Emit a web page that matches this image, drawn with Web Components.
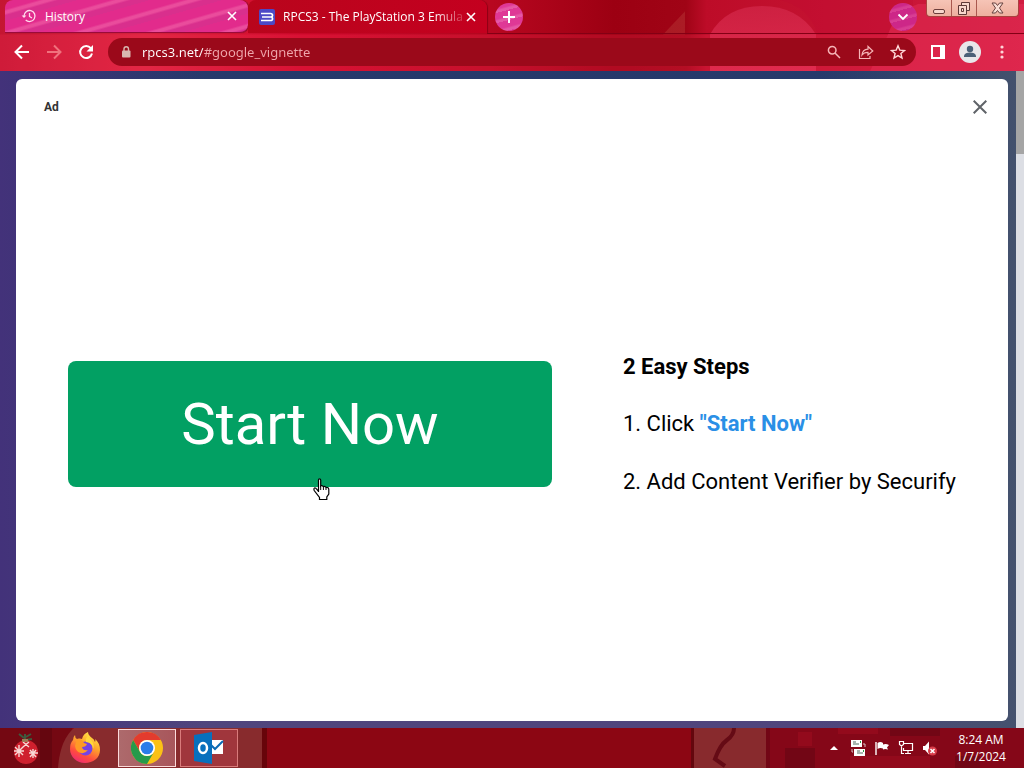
<!DOCTYPE html>
<html lang="en">
<head>
<meta charset="utf-8">
<title>RPCS3 - The PlayStation 3 Emulator</title>
<style>
html,body{height:100%;margin:0}
body{display:flex;flex-direction:column;font-family:"Open Sans","Noto Sans",sans-serif;overflow:hidden}
</style>
</head>
<body>
<browser-frame>
  <browser-tab slot="tabs" label="History" kind="history"></browser-tab>
  <browser-tab slot="tabs" label="RPCS3 - The PlayStation 3 Emula" kind="site" active></browser-tab>
  <browser-toolbar slot="toolbar" url="rpcs3.net/#google_vignette"></browser-toolbar>
  <ad-card></ad-card>
</browser-frame>
<task-bar></task-bar>

<script>
const base = `*,:host{box-sizing:border-box}
button{border:0;background:none;padding:0;margin:0;color:inherit;font:inherit;display:flex;align-items:center;justify-content:center}
svg{display:block;flex:none}`;
const define = (name, render) => customElements.define(name, class extends HTMLElement {
  connectedCallback() {
    if (this.shadowRoot) return;
    const t = document.createElement('template');
    t.innerHTML = render(this);
    this.attachShadow({mode: 'open'}).append(t.content.cloneNode(true));
  }
});

define('browser-tab', el => {
  const active = el.hasAttribute('active');
  const icon = active
    ? `<svg width="16" height="16" viewBox="0 0 16 16"><rect width="16" height="16" rx="2" fill="#4c49c6"/><path d="M2 4.500h9.500q2 0 2 1.800t-1.500 1.700q1.500 0 1.500 1.800t-2 1.700H2M3 8h9" fill="none" stroke="#fff" stroke-width="1.700"/></svg>`
    : `<svg width="16" height="16" viewBox="0 0 16 16" fill="none" stroke="#ffdcec" stroke-width="1.300"><path d="M3 8a5.500 5.500 0 1 1 1.700 4M8.500 5v3.500l2.500 1.500"/><path d="M.6 7.400h4.800L3 10z" fill="#ffdcec" stroke="none"/></svg>`;
  return `<style>${base}
:host{display:flex;align-items:center;height:33px;padding:0 8px 0 16px;gap:8px;color:#fff;font-size:12px;min-width:0;
${active ? 'flex:0 1 239px;padding-left:11px;background:linear-gradient(90deg,#b9051c,#c4001f);border-radius:8px 8px 0 0;box-shadow:1px 0 1px #8c0014'
 : 'flex:0 1 243px;background:repeating-linear-gradient(164deg,#e22b8c 0 9px,#ea4c9c 11px 13px,#d92f8d 15px 20px);border-radius:8px 8px 8px 0;border-bottom:1px solid #9b0a39;box-shadow:1px 0 1px #820b2d'}}
span{flex:1;overflow:hidden;white-space:nowrap;${active ? 'mask-image:linear-gradient(90deg,#000 84%,#0003)' : ''}}
button{width:16px;height:16px;margin-left:-8px}</style>
${icon}<span>${el.getAttribute('label')}</span>
<button aria-label="Close tab"><svg width="10" height="10" viewBox="0 0 10 10" stroke="#fff" stroke-width="1.600"><path d="M1 1l8 8M9 1L1 9"/></svg></button>`;
});

define('window-controls', () => `<style>${base}
:host{display:flex;height:17px;border:1px solid #a9423f;border-top:0;border-radius:0 0 4px 4px;background:linear-gradient(#f6c4b6,#eeb09f);overflow:hidden}
button{width:24px}
button+button{border-left:1px solid #a9584f;width:25px}
button:last-child{width:42px}</style>
<button aria-label="Minimize"><svg width="14" height="15" viewBox="0 0 14 15"><rect x="1.500" y="8.500" width="11" height="4" rx="1.500" fill="#f7d6cc" stroke="#6b3d3a"/></svg></button>
<button aria-label="Restore"><svg width="14" height="15" viewBox="0 0 14 15" fill="#f7d6cc" stroke="#5e3937"><path d="M4.500 1.500h8v8h-8z"/><path d="M1.500 4.500h8v9h-8z"/><path d="M4.500 7.500h2v3h-2z"/></svg></button>
<button aria-label="Close"><svg width="13" height="12" viewBox="0 0 13 12"><path d="M1 1h3.500l2 2.500 2-2.500H12L8.500 6l3.500 5H8.500l-2-2.500-2 2.500H1l3.500-5z" fill="#f8dcd4" stroke="#674341"/></svg></button>`);

define('browser-toolbar', el => `<style>${base}
:host{display:flex;align-items:center;height:38px;padding:0 6px;color:#fff}
button{width:32px;height:32px;flex:none}
form{flex:1;display:flex;align-items:center;min-width:0;height:28px;margin:0 6px;padding:0 2px 0 12px;border-radius:14px;background:#9b091a}
input{flex:1;min-width:0;border:0;outline:0;padding:0;margin-left:10px;height:24px;font:13px "Noto Sans","Open Sans",sans-serif;color:transparent;background:linear-gradient(90deg,#fff 61px,#efa6ac 61px);background-clip:text;-webkit-background-clip:text}
</style>
<button aria-label="Back"><svg width="16" height="16" viewBox="0 0 16 16" fill="none" stroke="#fff" stroke-width="2"><path d="M15 8H2M8 1.500L1.500 8 8 14.500"/></svg></button>
<button aria-label="Forward"><svg width="16" height="16" viewBox="0 0 16 16" fill="none" stroke="#f0727d" stroke-width="2"><path d="M1 8h13M8 1.500L14.500 8 8 14.500"/></svg></button>
<button aria-label="Reload"><svg width="16" height="16" viewBox="0 0 16 16"><path d="M12.800 4.200A6 6 0 1 0 14 9.500" fill="none" stroke="#fff" stroke-width="2"/><path d="M15 1v6.500H8.500z" fill="#fff"/></svg></button>
<form>
<svg width="12" height="14" viewBox="0 0 12 14"><rect x="2" y="5.500" width="8.500" height="7" rx="1" fill="#d9b8b0"/><path d="M4 6V4a2.250 2.250 0 0 1 4.500 0v2" fill="none" stroke="#d9b8b0" stroke-width="1.400"/></svg>
<input aria-label="Address" value="${el.getAttribute('url')}">
<button type="button" aria-label="Zoom"><svg width="16" height="16" viewBox="0 0 16 16" fill="none" stroke="#f6b5b7" stroke-width="1.500"><circle cx="6.200" cy="6.200" r="3.800"/><path d="M9 9l5 5"/></svg></button>
<button type="button" aria-label="Share"><svg width="16" height="16" viewBox="0 0 16 16" fill="none" stroke="#f6b5b7" stroke-width="1.200"><path d="M1.500 5v9.500H12V12"/><path d="M4 11q.5-5.500 6-5.800V2.500L14.800 7 10 11V8.300Q6 8.200 4 11z"/></svg></button>
<button type="button" aria-label="Bookmark"><svg width="16" height="16" viewBox="0 0 16 16" fill="none" stroke="#ffd9d9" stroke-width="1.400"><path d="M8 1.800l1.800 4.300 4.700.4-3.600 3 1.100 4.600-4-2.500-4 2.500 1.100-4.600-3.600-3 4.700-.4z"/></svg></button>
</form>
<button aria-label="Side panel"><svg width="14" height="14" viewBox="0 0 14 14"><path d="M0 0h14v14H0zM2 2v10h7V2z" fill="#fff" fill-rule="evenodd"/></svg></button>
<button aria-label="Profile"><svg width="22" height="22" viewBox="0 0 22 22"><circle cx="11" cy="11" r="11" fill="#e8e6ea"/><circle cx="11" cy="8" r="3.200" fill="#4b6078"/><path d="M5 16v-1.500q1-3 6-3t6 3V16z" fill="#4b6078"/></svg></button>
<button aria-label="Menu"><svg width="4" height="14" viewBox="0 0 4 14" fill="#ffd5d8"><circle cx="2" cy="2" r="1.600"/><circle cx="2" cy="7" r="1.600"/><circle cx="2" cy="12" r="1.600"/></svg></button>`);

define('browser-frame', () => `<style>${base}
:host{display:flex;flex-direction:column;flex:1;min-height:0}
header{position:relative;isolation:isolate;box-shadow:inset 0 -1px #8a4c78}
.art{position:absolute;inset:0;width:100%;height:100%;z-index:-1}
.strip{display:flex;align-items:flex-start;height:33px;padding:0 5px}
.round{width:28px;height:28px;margin:3px 0 0 8px;border-radius:50%;background:repeating-linear-gradient(165deg,#df3896 0 6px,#e558a6 8px 10px)}
.spacer{flex:1}
.list{margin:3px 9px 0 0;background:repeating-linear-gradient(165deg,#cd2788 0 6px,#d83d93 8px 10px)}
main{flex:1;display:flex;min-height:0;background:linear-gradient(90deg,#43327a,transparent 20%,transparent 80%,#44526d),linear-gradient(#26396b,#3b4374 60%,#50457d)}
.view{flex:1;display:flex;padding:8px 8px 7px 16px;min-width:0}
.scroll{width:8px;background:#dcdee4}
.thumb{height:83px;background:#a5a5a5}
</style>
<header>
<svg class="art" viewBox="0 0 1024 70" preserveAspectRatio="none"><defs>
<linearGradient id="a"><stop offset="0" stop-color="#c41632"/><stop offset=".14" stop-color="#de2541"/><stop offset=".3" stop-color="#d0082a"/><stop offset=".48" stop-color="#b80720"/><stop offset=".6" stop-color="#9c0012"/><stop offset=".67" stop-color="#a00416"/><stop offset=".69" stop-color="#bd0c28"/><stop offset="1" stop-color="#d01c40"/></linearGradient>
<linearGradient id="b" x2="0" y2="1"><stop stop-color="#d3284a"/><stop offset="1" stop-color="#e83358"/></linearGradient></defs>
<rect width="1024" height="70" fill="url(#a)"/>
<path d="M0 34h1024v36H0z" fill="#f12c50" opacity=".25"/>
<path d="M663 34l22-23v23z" fill="#b53434" opacity=".5"/>
<path d="M710 34q16-28 52-28t54 28v36H710z" fill="url(#b)" opacity=".7"/>
<path d="M780 0q28 6 38 34h70q6-18 25-26V0H780z" fill="#bf0b31" opacity=".3"/>
<path d="M888 34q7-22 30-30h106v66H870z" fill="#e42e55" opacity=".5"/>
<path d="M487 33h537" stroke="#830014"/></svg>
<div class="strip"><slot name="tabs"></slot>
<button class="round" aria-label="New tab"><svg width="12" height="12" viewBox="0 0 12 12" stroke="#fff" stroke-width="2"><path d="M6 0v12M0 6h12"/></svg></button>
<div class="spacer"></div>
<button class="round list" aria-label="Search tabs"><svg width="12" height="8" viewBox="0 0 12 8" fill="none" stroke="#fff" stroke-width="1.800"><path d="M1.500 1.500L6 6l4.500-4.500"/></svg></button>
<window-controls></window-controls></div>
<slot name="toolbar"></slot>
</header>
<main><div class="view"><slot></slot></div><div class="scroll"><div class="thumb"></div></div></main>`);

define('ad-card', () => `<style>${base}
:host{flex:1;display:flex;flex-direction:column;background:#fff;border-radius:6px;font-family:Roboto,sans-serif;color:#000;min-width:0}
.top{display:flex;align-items:center;justify-content:space-between;height:56px;padding:0 16px 0 28px;font-size:12px;font-weight:700;color:#333}
.top button{width:24px;height:24px}
.body{flex:1;display:grid;grid-template-columns:484fr 333fr;gap:71px;align-items:center;padding:0 52px 8px}
.cta{position:relative}
.cta button{width:100%;height:126px;border-radius:8px;background:#02a063;color:#fff;font-size:58px}
.pointer{position:absolute;left:50%;top:117px;margin-left:3px}
.steps{font-size:22px;line-height:26px;white-space:nowrap}
h2{font-size:22px;line-height:26px;font-weight:700;margin:0 0 31px}
ol{list-style:none;margin:0;padding:0;display:grid;gap:32px}
a{color:#2a8fe6;font-weight:700;text-decoration:none}
</style>
<div class="top"><span>Ad</span><button aria-label="Close ad"><svg width="14" height="14" viewBox="0 0 14 14" stroke="#5f6368" stroke-width="2"><path d="M.7.7l12.600 12.600M13.300.7L.7 13.300"/></svg></button></div>
<div class="body"><div class="cta"><button>Start Now</button>
<svg class="pointer" width="18" height="23" viewBox="0 0 18 23"><path d="M5.500 14V2Q5.500.8 6.500.8T7.700 2v6q1.200-1.200 2.600.6 1.500-.8 2.700.9 2.800-.5 2.800 2v4.500l-2 3v2.500H6.500v-2L1.200 12.500Q.5 10.500 1.500 10q1.300-.3 2.200 1.200l1.800 2.300" fill="#fff" stroke="#000" stroke-width="1.200"/><path d="M7.700 8v4M10.400 9v3M13 10v2" stroke="#000"/></svg></div>
<div class="steps"><h2>2 Easy Steps</h2><ol><li>1. Click <a href="#start">"Start Now"</a></li><li>2. Add Content Verifier by Securify</li></ol></div></div>`);

define('task-bar', () => `<style>${base}
:host{display:flex;align-items:center;height:40px;flex:none;position:relative;isolation:isolate;color:#fff;background:#8c0613;padding-right:12px}
.art{position:absolute;inset:0;width:100%;height:100%;z-index:-1}
.app{width:58px;height:38px}
.start{width:52px}
.open{margin-left:4px;border:1px solid #d97b7b;background:#b2404890}
.current{border-color:#fbdada;background:linear-gradient(90deg,#ad6a6c,#a8565b)}
.spacer{flex:1}
.tray{width:24px;height:32px}
time{width:62px;margin-left:8px;font-size:12px;line-height:17px;text-align:center;white-space:nowrap}
</style>
<svg class="art" viewBox="0 0 1024 40" preserveAspectRatio="none"><rect width="1024" height="40" fill="#8c0613"/><path d="M0 0h72v40H0z" fill="#740812"/><path d="M40 0h12v40H40z" fill="#65060f"/><path d="M58 40q2-28 16-40h189v40z" fill="#882b2d"/><path d="M262 0h5v40h-5z" fill="#67040a"/><path d="M691 0h3v40h-3z" fill="#64070d"/><path d="M694 0h72v40h-72z" fill="#882a2d"/><path d="M734 0q0 7-7 12t-12 19l10 7" fill="none" stroke="#650b15" stroke-width="4"/><path d="M766 0h258v40H766z" fill="#850718"/><path d="M766 0h4v40h-4zM785 20h30v20h-30zM890 0h50v8h-50zM955 28h25v12h-25z" fill="#5f0511" opacity=".5"/><path d="M798 4h14v14h-14zM838 0h40v6h-40zM850 28h80v12h-80z" fill="#a71022" opacity=".4"/></svg>
<button class="app start" aria-label="Start"><svg width="30" height="36" viewBox="0 0 30 36"><path d="M14 11V4M13 8l-5-4M15 7l5-3M14 10l7-1" stroke="#3d5a3e" stroke-width="2"/><circle cx="15" cy="22" r="12" fill="#cf202e"/><path d="M4 17l8 8M12 17l-8 8M8 15v12M3 21h10M22 19v9M18 23h9M19 20l6 7M25 20l-6 7M12 12l6 5M18 12l-6 5" stroke="#f8dad6" stroke-width="1.400"/><path d="M11 9h6v3h-6z" fill="#9b7c56"/></svg></button>
<button class="app" style="margin-left:4px" aria-label="Firefox"><svg width="32" height="32" viewBox="0 0 32 32"><defs><linearGradient id="f" x1=".8" y1="0" x2=".3" y2="1"><stop stop-color="#fff04a"/><stop offset=".4" stop-color="#ffa62b"/><stop offset=".75" stop-color="#ff4b3f"/><stop offset="1" stop-color="#ef2a72"/></linearGradient></defs><path d="M19 0q0 3 4 6 2 1 3 4 1-1 0-3 5 4 5 11c0 8-7 13-15 13S1 25 1 17q0-6 3-9 0-3 2-5 0 3 2 4 3-1 5 0 1-5 6-7z" fill="url(#f)"/><circle cx="16.500" cy="16.500" r="7" fill="#7542e5"/><path d="M8 7q4-1 7 4l3 1q-1 3-5 3 1 4 6 3-3 4-7 3-5-1-6-7z" fill="#ff9a26"/><path d="M17 10q7 1 7 7 2-5-2-9-2-2-2-5-4 3-3 7z" fill="#ffd83c"/></svg></button>
<button class="app open current" aria-label="Google Chrome"><svg width="32" height="32" viewBox="0 0 32 32"><circle cx="16" cy="16" r="16" fill="#fbc116"/><path d="M2.140 8A16 16 0 0 1 29.860 8H16a8 8 0 0 0-6.930 12z" fill="#e33b2e"/><path d="M2.140 8a16 16 0 0 0 13.860 24l6.930-12A8 8 0 0 1 9.070 20z" fill="#269a4b"/><circle cx="16" cy="16" r="8" fill="#fff"/><circle cx="16" cy="16" r="6.300" fill="#2a7de9"/></svg></button>
<button class="app open" aria-label="Outlook"><svg width="32" height="32" viewBox="0 0 32 32"><path d="M17 8h13v14H17z" fill="#fff"/><path d="M17 12l5 5 8-8" fill="none" stroke="#0b6ab4" stroke-width="2"/><path d="M1 3l18-3v32L1 29z" fill="#0870bd"/><ellipse cx="10" cy="16" rx="4" ry="5" fill="none" stroke="#fff" stroke-width="2.500"/></svg></button>
<div class="spacer"></div>
<button class="tray" aria-label="Show hidden icons"><svg width="8" height="4" viewBox="0 0 8 4"><path d="M4 0l4 4H0z" fill="#fff"/></svg></button>
<button class="tray" aria-label="Network transfer"><svg width="16" height="16" viewBox="0 0 16 16"><path d="M1 0h11v7H1zM4 9h11v7H4z" fill="#fff"/><path d="M3 2h3M3 4h6M7 11h3M7 13h6" stroke="#506b60"/><path d="M10 2h1M13 11h1" stroke="#2a9b46" stroke-width="2"/><path d="M13 4h2v3M2 9v3h1" fill="none" stroke="#d8c3c3"/></svg></button>
<button class="tray" aria-label="Action Center"><svg width="14" height="14" viewBox="0 0 14 14"><path d="M1 1v13" stroke="#fff" stroke-width="1.400"/><path d="M2.500 2q3-2 5.500 0v1.500q3-1 6 .5l-2 2.500 1 2q-3-1-5 0V7.500q-3-1-5.500.5z" fill="#fff"/></svg></button>
<button class="tray" aria-label="Network"><svg width="16" height="16" viewBox="0 0 16 16" fill="none" stroke="#fff"><path d="M6 3.500h8.500v7h-9V8M10 11v2.500M7 13.500h6M1.500 1.500h4v3l-2 1.500-2-1.500zM3.500 6v7.500H6" stroke-width="1.200"/></svg></button>
<button class="tray" aria-label="Volume muted"><svg width="16" height="16" viewBox="0 0 16 16"><path d="M1 6h2l4-4.500v13L3 10H1z" fill="#fff"/><circle cx="10.500" cy="11" r="4.500" fill="#d83c49"/><path d="M8.500 9l4 4M12.500 9l-4 4" stroke="#fff" stroke-width="1.500"/></svg></button>
<time datetime="2024-01-07T08:24">8:24 AM<br>1/7/2024</time>`);
</script>
</body>
</html>
